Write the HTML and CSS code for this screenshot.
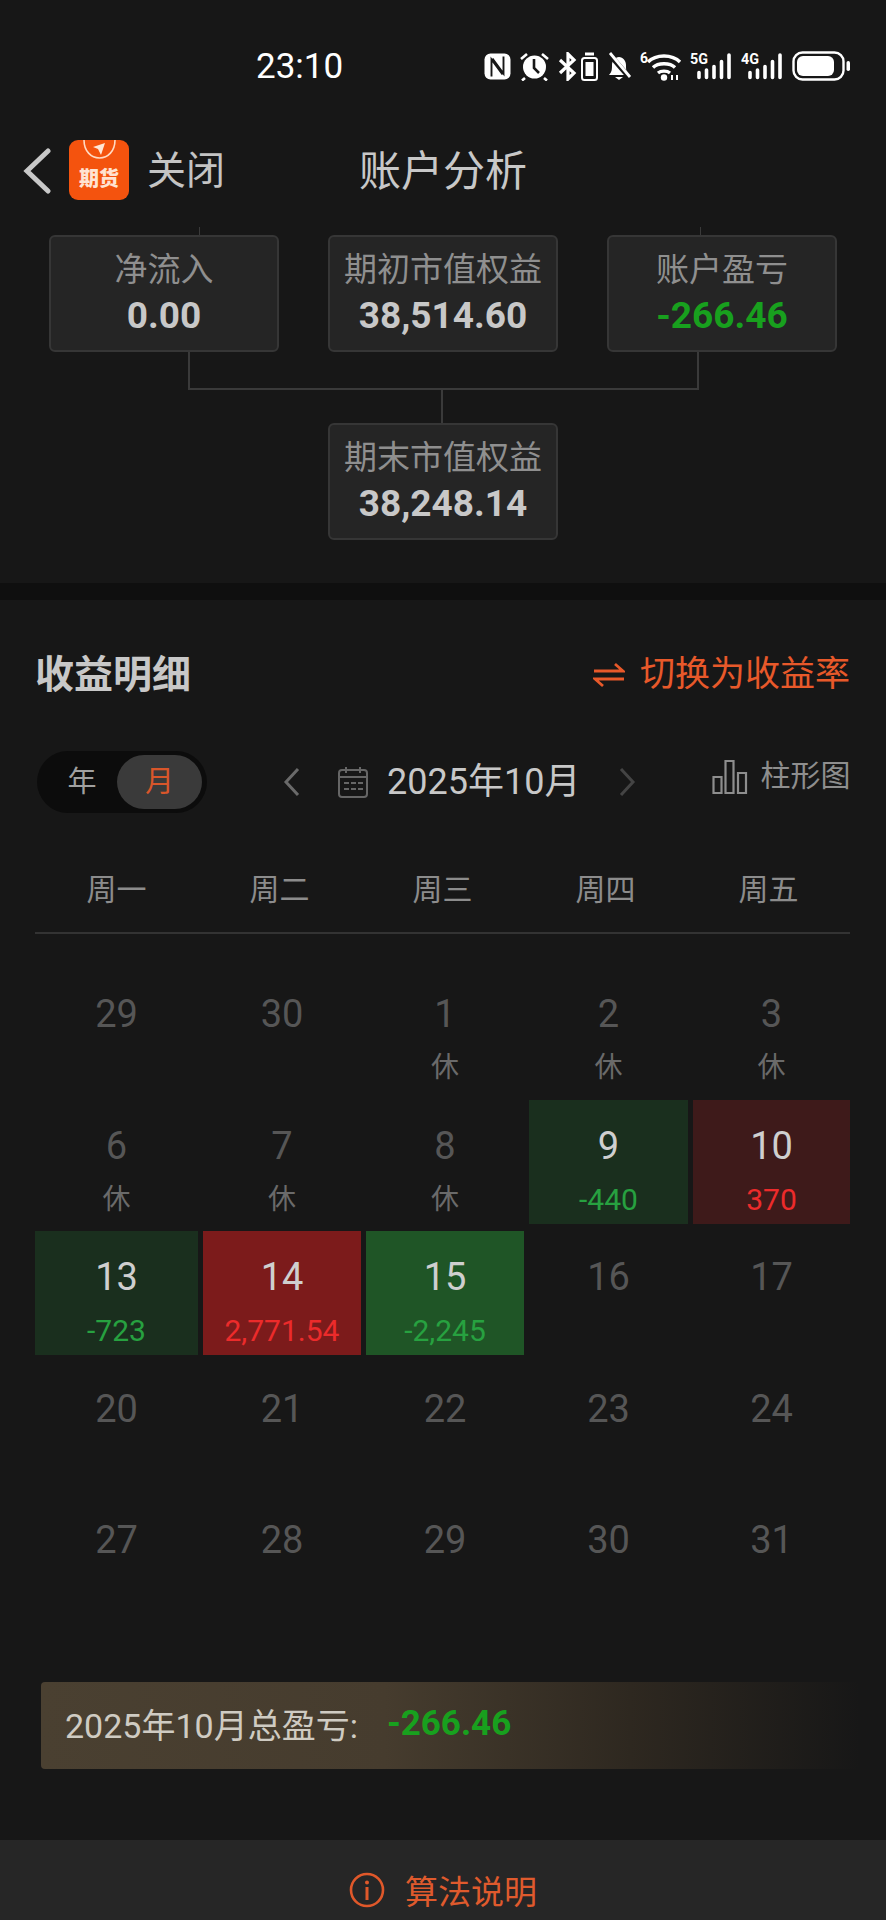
FILE: index.html
```html
<!DOCTYPE html>
<html lang="zh-CN">
<head>
<meta charset="utf-8">
<title>账户分析</title>
<link rel="stylesheet" href="styles.css">
</head>
<body>
<div class="page">
  <div class="status">
    <span class="time">23:10</span>
    <div class="status-icons">
      <svg width="27" height="27" viewBox="0 0 27 27"><rect x="0.500" y="0.500" width="26" height="26" rx="6" fill="#fff"/><path d="M7.500 23.500V6.500l11 15M19.500 3.500v17L8.500 5.500" fill="none" stroke="#171717" stroke-width="1.900"/></svg>
      <svg width="31" height="29" viewBox="0 0 31 29"><circle cx="15.500" cy="15" r="11.500" fill="#fff"/><path d="M15 7v9l5 5" fill="none" stroke="#171717" stroke-width="2.600"/><path d="M2 7l6-5M29 7l-6-5M6 26l-3 2.500M25 26l3 2.500" stroke="#fff" stroke-width="2.600" fill="none"/></svg>
      <svg width="40" height="29" viewBox="0 0 40 29"><path d="M2 8l14 13-6 6V2l6 6L2 21" fill="none" stroke="#fff" stroke-width="3.200"/><rect x="24" y="6" width="15" height="22" rx="2.500" fill="none" stroke="#fff" stroke-width="2"/><rect x="27.500" y="10" width="8" height="14" fill="#fff"/><rect x="27" y="0.500" width="9" height="3" fill="#fff"/></svg>
      <svg width="26" height="29" viewBox="0 0 26 29"><path d="M3 23c3-3 3-6 3-10s3-8 7-8 7 4 7 8 0 7 3 10z" fill="#fff"/><path d="M9 25h8l-4 3z" fill="#fff"/><path d="M3 2l20 23" stroke="#171717" stroke-width="5"/><path d="M4 1l20 24" stroke="#fff" stroke-width="2.800"/></svg>
      <svg class="sig-svg" width="42" height="36" viewBox="0 -6 42 36"><text x="0" y="12" class="sig-six">6</text><path d="M8 11c8-8 24-8 32 0M13 16.500c5-5 17-5 22 0M18 22c3-2.500 9-2.500 12 0" fill="none" stroke="#fff" stroke-width="3.400"/><circle cx="24" cy="26.500" r="3.200" fill="#fff"/><path d="M32 24v5M37 24v5" stroke="#fff" stroke-width="2"/></svg>
      <svg class="sig-svg" width="43" height="35" viewBox="0 -6 43 35"><text x="0" y="12" class="sig-t" textLength="18" lengthAdjust="spacingAndGlyphs">5G</text><path d="M9 20.500v5M16.500 18v7.500M24 14.500v11M31.500 9.500v16M39 3v22.500" stroke="#fff" stroke-width="3.600" stroke-linecap="round" fill="none"/></svg>
      <svg class="sig-svg" width="43" height="35" viewBox="0 -6 43 35"><text x="0" y="12" class="sig-t" textLength="18" lengthAdjust="spacingAndGlyphs">4G</text><path d="M9 20.500v5M16.500 18v7.500M24 14.500v11M31.500 9.500v16M39 3v22.500" stroke="#fff" stroke-width="3.600" stroke-linecap="round" fill="none"/></svg>
      <svg width="58" height="30" viewBox="0 0 58 30"><rect x="1.500" y="1.500" width="50" height="27" rx="9" fill="none" stroke="#fff" stroke-width="2.400"/><rect x="5" y="5" width="37" height="20" rx="6" fill="#fff"/><rect x="54.500" y="10" width="3.500" height="10" rx="1.700" fill="#fff"/></svg>
    </div>
  </div>

  <header class="nav">
    <svg class="back" width="30" height="46" viewBox="0 0 30 46"><path d="M25 3L4 23l21 20" fill="none" stroke="#c8c8c8" stroke-width="5" stroke-linecap="round"/></svg>
    <div class="logo">
      <svg class="logo-arc" width="36" height="22" viewBox="0 0 36 22"><path d="M1 0c0 11 7 18 15.500 18S32 11 32 0" fill="none" stroke="#ffd9c2" stroke-width="1.600"/><path d="M10 7l12-4-4 12-3-6z" fill="#ffe6d6"/></svg>
      <span class="logo-text">期货</span>
    </div>
    <span class="close">关闭</span>
    <h1 class="title">账户分析</h1>
  </header>

  <section class="tree">
    <i class="line stub-a"></i>
    <i class="line stub-b"></i>
    <i class="line drop-a"></i>
    <i class="line drop-b"></i>
    <i class="line bar"></i>
    <i class="line drop-c"></i>
    <div class="tree-row">
      <div class="node"><div class="node-label">净流入</div><div class="node-value">0.00</div></div>
      <div class="node"><div class="node-label">期初市值权益</div><div class="node-value">38,514.60</div></div>
      <div class="node"><div class="node-label">账户盈亏</div><div class="node-value green">-266.46</div></div>
    </div>
    <div class="tree-row tree-end">
      <div class="node"><div class="node-label">期末市值权益</div><div class="node-value">38,248.14</div></div>
    </div>
  </section>

  <div class="band"></div>

  <section class="detail">
    <div class="detail-head">
      <h2 class="detail-title">收益明细</h2>
      <div class="switch">
        <svg width="32" height="26" viewBox="0 0 32 26"><path d="M1 9h29L22 2M31 17H2l8 7" fill="none" stroke="#e8592a" stroke-width="2.800"/></svg>
        <span>切换为收益率</span>
      </div>
    </div>

    <div class="tools">
      <div class="toggle"><span class="tg">年</span><span class="tg on">月</span></div>
      <svg class="prev" width="18" height="30" viewBox="0 0 18 30"><path d="M15 2L3 15l12 13" fill="none" stroke="#6a6a6a" stroke-width="3"/></svg>
      <svg class="cal" width="32" height="32" viewBox="0 0 32 32"><rect x="2" y="4" width="28" height="27" rx="3" fill="none" stroke="#666" stroke-width="2"/><path d="M2 11h28M9 1v6M23 1v6" stroke="#666" stroke-width="2" fill="none"/><path d="M7 17h5M14 17h5M21 17h5M7 23h5M14 23h5M21 23h5" stroke="#666" stroke-width="2" fill="none"/></svg>
      <span class="month">2025年10月</span>
      <svg class="next" width="18" height="30" viewBox="0 0 18 30"><path d="M3 2l12 13L3 28" fill="none" stroke="#444" stroke-width="3"/></svg>
      <svg class="chart" width="36" height="34" viewBox="0 0 36 34"><path d="M1.500 17h8v16h-8zM13.500 1h8v32h-8zM26 13h8v20h-8z" fill="none" stroke="#8e8e8e" stroke-width="2.200"/></svg>
      <span class="chart-label">柱形图</span>
    </div>

    <div class="weekdays"><span>周一</span><span>周二</span><span>周三</span><span>周四</span><span>周五</span></div>

    <div class="grid">
      <div class="cell"><div class="num">29</div></div>
      <div class="cell"><div class="num">30</div></div>
      <div class="cell"><div class="num">1</div><div class="sub rest">休</div></div>
      <div class="cell"><div class="num">2</div><div class="sub rest">休</div></div>
      <div class="cell"><div class="num">3</div><div class="sub rest">休</div></div>

      <div class="cell"><div class="num">6</div><div class="sub rest">休</div></div>
      <div class="cell"><div class="num">7</div><div class="sub rest">休</div></div>
      <div class="cell"><div class="num">8</div><div class="sub rest">休</div></div>
      <div class="cell g1"><div class="num">9</div><div class="sub pos">-440</div></div>
      <div class="cell r1"><div class="num">10</div><div class="sub neg">370</div></div>

      <div class="cell g1"><div class="num">13</div><div class="sub pos">-723</div></div>
      <div class="cell r2"><div class="num">14</div><div class="sub neg">2,771.54</div></div>
      <div class="cell g2"><div class="num">15</div><div class="sub pos">-2,245</div></div>
      <div class="cell"><div class="num">16</div></div>
      <div class="cell"><div class="num">17</div></div>

      <div class="cell"><div class="num">20</div></div>
      <div class="cell"><div class="num">21</div></div>
      <div class="cell"><div class="num">22</div></div>
      <div class="cell"><div class="num">23</div></div>
      <div class="cell"><div class="num">24</div></div>

      <div class="cell"><div class="num">27</div></div>
      <div class="cell"><div class="num">28</div></div>
      <div class="cell"><div class="num">29</div></div>
      <div class="cell"><div class="num">30</div></div>
      <div class="cell"><div class="num">31</div></div>
    </div>

    <div class="summary">
      <span class="summary-label">2025年10月总盈亏:</span>
      <span class="summary-value">-266.46</span>
    </div>
  </section>

  <footer class="foot">
    <svg width="36" height="36" viewBox="0 0 36 36"><circle cx="18" cy="18" r="16" fill="none" stroke="#e0582a" stroke-width="2.600"/><circle cx="18" cy="10.500" r="2" fill="#e0582a"/><path d="M18 15v13" stroke="#e0582a" stroke-width="3"/></svg>
    <span>算法说明</span>
  </footer>
</div>
</body>
</html>
```

FILE: styles.css
```css
* { box-sizing: border-box; }
html, body { margin: 0; padding: 0; background: #171717; }
body { font-family: Roboto, "Noto Sans CJK SC", sans-serif; color: #c8c8c8; }
.page { width: 886px; height: 1920px; overflow: hidden; display: flex; flex-direction: column; background: #171717; }
h1, h2 { margin: 0; font-weight: 400; }

.status { height: 100px; display: flex; align-items: center; padding: 32px 36px 0 256px; }
.time { color: #fff; font-size: 35px; line-height: 40px; margin-top: 1px; }
.status-icons { margin-left: auto; display: flex; align-items: center; gap: 8px; }
.sig-svg { margin-top: -6px; }
.sig-t { font-size: 15px; font-weight: 700; fill: #fff; font-family: Roboto, sans-serif; }
.sig-six { font-size: 14px; font-weight: 700; fill: #fff; font-family: Roboto, sans-serif; }

.nav { height: 127px; position: relative; display: flex; align-items: flex-start; padding: 40px 0 0 23px; }
.back { margin-top: 8px; flex: none; }
.logo { width: 60px; height: 60px; margin-left: 16px; background: #f4530e; border-radius: 9px; position: relative; overflow: hidden; flex: none; text-align: center; }
.logo-arc { position: absolute; left: 14px; top: 0; }
.logo-text { position: absolute; left: 0; right: 0; top: 25px; color: #ffe3d2; font-size: 20px; line-height: 28px; font-weight: 900; }
.close { margin-left: 18px; font-size: 39px; line-height: 62px; color: #c4c4c4; }
.title { position: absolute; left: 0; right: 0; top: 42px; text-align: center; font-size: 42px; line-height: 60px; color: #c8c8c8; }

.tree { position: relative; height: 356px; padding-top: 8px; }
.tree-row { display: flex; justify-content: center; gap: 49px; }
.tree-end { margin-top: 71px; }
.node { width: 230px; height: 117px; background: #252525; border: 2px solid #363636; border-radius: 6px; text-align: center; padding-top: 9px; }
.node-label { font-size: 33px; line-height: 47px; color: #8f8f8f; white-space: nowrap; }
.node-value { font-size: 37px; line-height: 46px; font-weight: 700; color: #c8c8c8; }
.green { color: #18a01e; }
.line { position: absolute; background: #3a3a3a; display: block; }
.stub-a { left: 199px; top: 0; width: 1px; height: 8px; }
.stub-b { left: 700px; top: 0; width: 1px; height: 8px; }
.drop-a { left: 188px; top: 125px; width: 2px; height: 37px; }
.drop-b { left: 697px; top: 125px; width: 2px; height: 37px; }
.bar { left: 188px; top: 161px; width: 511px; height: 2px; }
.drop-c { left: 441px; top: 162px; width: 2px; height: 34px; }

.band { height: 17px; background: #0f0f0f; flex: none; }

.detail { flex: 1; padding: 0 36px 0 35px; }
.detail-head { height: 48px; margin-top: 51px; display: flex; align-items: center; justify-content: space-between; }
.detail-title { font-size: 39px; line-height: 48px; font-weight: 700; color: #c8c8c8; }
.switch { display: flex; align-items: center; gap: 15px; color: #e8592a; font-size: 35px; line-height: 48px; white-space: nowrap; }

.tools { height: 62px; margin-top: 52px; display: flex; align-items: center; position: relative; }
.toggle { width: 170px; height: 62px; margin-left: 2px; background: #0c0c0c; border-radius: 31px; display: flex; align-items: center; padding: 0 4px 0 10px; flex: none; }
.tg { font-size: 29px; line-height: 54px; text-align: center; color: #a0a0a0; width: 70px; }
.tg.on { width: 85px; height: 54px; background: #3a3a3a; border-radius: 27px; color: #d8562a; }
.prev { margin-left: 76px; flex: none; }
.cal { margin-left: 36px; flex: none; }
.month { margin-left: 18px; font-size: 36px; line-height: 62px; color: #c8c8c8; white-space: nowrap; }
.next { margin-left: 38px; flex: none; }
.chart { margin-left: 76px; margin-top: -10px; flex: none; }
.chart-label { margin-left: 12px; font-size: 30px; line-height: 40px; color: #8e8e8e; margin-top: -12px; white-space: nowrap; }

.weekdays { height: 72px; margin-top: 49px; padding-bottom: 16px; border-bottom: 2px solid #333; display: grid; grid-template-columns: repeat(5, 1fr); text-align: center; font-size: 30px; line-height: 56px; color: #8c8c8c; }

.grid { margin-top: 34px; display: grid; grid-template-columns: 163px 158px 158px 159px 157px; grid-auto-rows: 124px; gap: 7.500px 5px; }
.cell { padding-top: 24px; text-align: center; }
.num { font-size: 38px; line-height: 44px; color: #565656; }
.sub { font-size: 30px; line-height: 44px; margin-top: 10px; white-space: nowrap; }
.sub.rest { font-size: 28px; color: #6a6a6a; }
.pos { color: #27a140; }
.neg { color: #ec2b2b; }
.g1 { background: #1a2f1e; }
.g2 { background: #1f5526; }
.r1 { background: #3e1a1a; }
.r2 { background: #7c1b1b; }
.g1 .num, .g2 .num, .r1 .num, .r2 .num { color: #cfcfcf; }

.summary { margin: 64px 0 0 6px; width: 819px; height: 87px; border-radius: 4px; background: linear-gradient(90deg, #4a4031 0%, #463c2e 42%, #2e2820 72%, #171717 100%); display: flex; align-items: center; padding: 0 0 5px 24px; }
.summary-label { font-size: 34px; color: #cfcbc2; white-space: nowrap; }
.summary-value { margin-left: 29px; font-size: 35px; font-weight: 700; color: #18a01e; }

.foot { height: 80px; flex: none; background: #262626; display: flex; align-items: center; justify-content: center; gap: 20px; padding: 20px 0 0 0; color: #df5a2d; font-size: 33px; overflow: hidden; }
```
